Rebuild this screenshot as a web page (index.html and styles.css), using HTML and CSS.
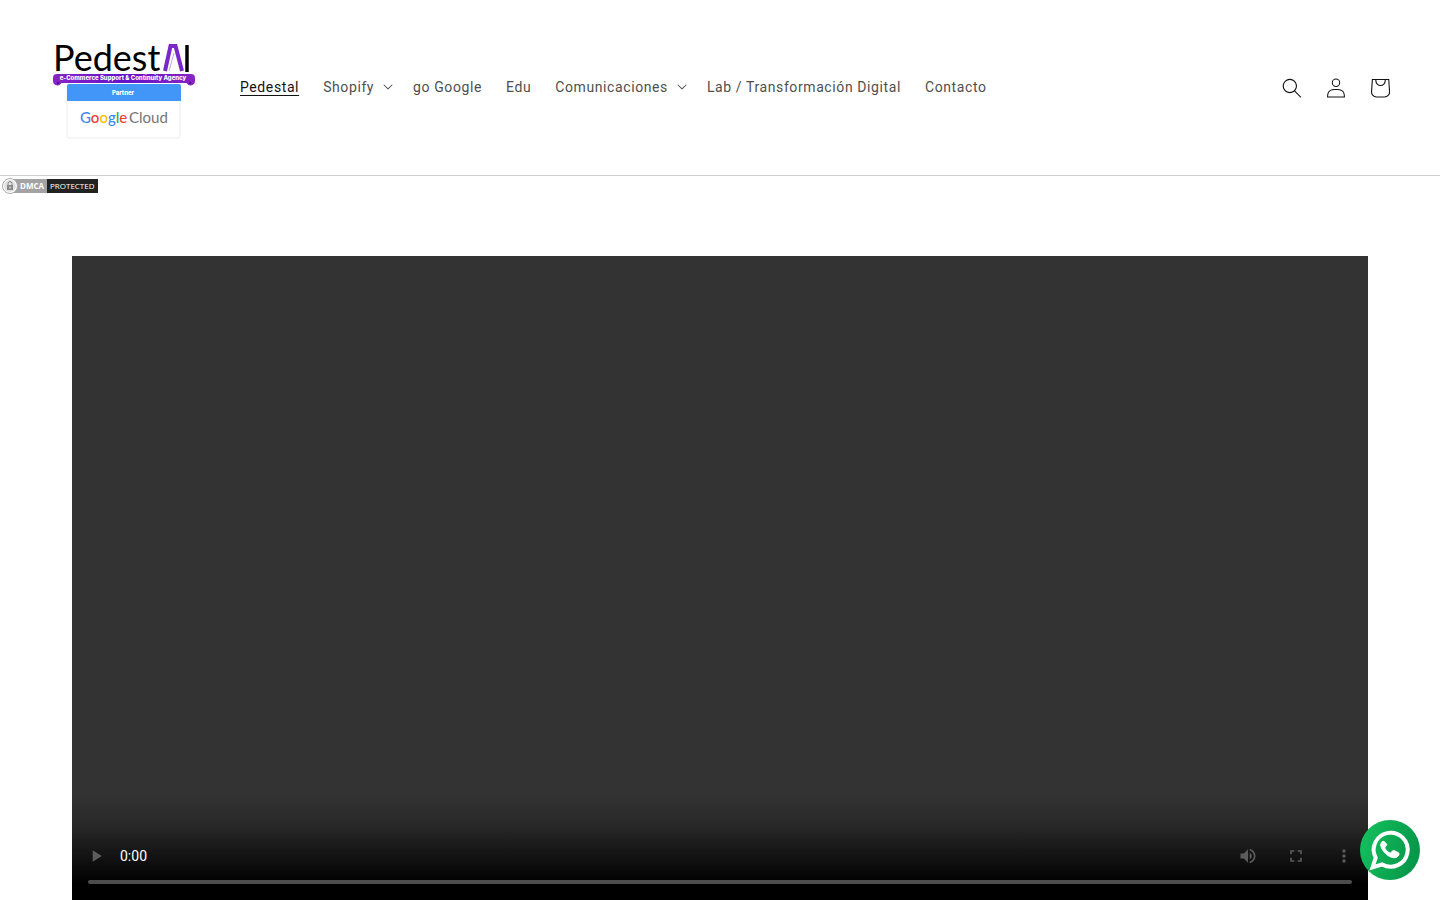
FILE: index.html
```html
<!DOCTYPE html>
<html lang="es">
<head>
    <meta charset="UTF-8">
    <meta name="viewport" content="width=device-width, initial-scale=1.0">
    <title>Pedestal</title>
    <link rel="stylesheet" href="styles.css">
</head>
<body>
    <header class="header">
        <a href="#" class="header-logo" aria-label="Pedestal">
            <svg width="150" height="135" viewBox="50 20 150 135">
                <defs>
                    <linearGradient id="ribbon" x1="0" x2="1" y1="0" y2="0">
                        <stop offset="0" stop-color="#8a24c4"/>
                        <stop offset="0.5" stop-color="#6412c8"/>
                        <stop offset="1" stop-color="#8a24c4"/>
                    </linearGradient>
                </defs>
                <text x="53" y="71" class="logo-name">Pedest</text>
                <path d="M165 71l5.500-25h5l6.500 25" fill="none" stroke="#7a28c8" stroke-width="4"/>
                <path d="M169 71l5-18" stroke="#c9a3ea" stroke-width="1" fill="none"/>
                <path d="M187 45v27" stroke="#000" stroke-width="3.500"/>
                <path d="M57 74h134a4 4 0 0 1 4 4v3a4.500 4.500 0 0 1-8.500 2H61.500a4.500 4.500 0 0 1-8.500-2v-3a4 4 0 0 1 4-4z" fill="url(#ribbon)"/>
                <circle cx="58" cy="83" r="1.200" fill="#4a0c91"/>
                <circle cx="190" cy="83" r="1.200" fill="#4a0c91"/>
                <text x="123" y="80" class="logo-tagline">e-Commerce Support &amp; Continuity Agency</text>
                <rect x="67" y="85" width="113" height="53" rx="2" fill="#fff" stroke="#ececec"/>
                <path d="M69 84h110a2 2 0 0 1 2 2v15H67V86a2 2 0 0 1 2-2z" fill="#4196f7"/>
                <text x="123" y="95" class="logo-tagline">Partner</text>
                <text x="80" y="123" class="logo-google"><tspan fill="#4285f4">G</tspan><tspan fill="#ea4335">o</tspan><tspan fill="#fbbc05">o</tspan><tspan fill="#4285f4">g</tspan><tspan fill="#34a853">l</tspan><tspan fill="#ea4335">e</tspan></text>
                <text x="129" y="123" class="logo-cloud">Cloud</text>
            </svg>
        </a>

        <nav class="menu">
            <a href="#" class="menu-link active">Pedestal</a>
            <button type="button" class="menu-link has-caret">Shopify
                <svg width="10" height="6" viewBox="0 0 10 6"><path fill="currentColor" d="M9.354.646a.5.5 0 0 0-.708 0L5 4.293 1.354.646a.5.5 0 0 0-.708.708l4 4a.5.5 0 0 0 .708 0l4-4a.5.5 0 0 0 0-.708z"/></svg>
            </button>
            <a href="#" class="menu-link">go Google</a>
            <a href="#" class="menu-link">Edu</a>
            <button type="button" class="menu-link has-caret">Comunicaciones
                <svg width="10" height="6" viewBox="0 0 10 6"><path fill="currentColor" d="M9.354.646a.5.5 0 0 0-.708 0L5 4.293 1.354.646a.5.5 0 0 0-.708.708l4 4a.5.5 0 0 0 .708 0l4-4a.5.5 0 0 0 0-.708z"/></svg>
            </button>
            <a href="#" class="menu-link">Lab / Transformación Digital</a>
            <a href="#" class="menu-link">Contacto</a>
        </nav>

        <div class="header-icons">
            <button type="button" class="icon-button" aria-label="Búsqueda">
                <svg width="20" height="20" viewBox="0 0 18 19"><path fill="currentColor" fill-rule="evenodd" d="M11.030 11.680A5.784 5.784 0 1 1 2.850 3.500a5.784 5.784 0 0 1 8.180 8.180zm.260 1.120a6.780 6.780 0 1 1 .720-.700l5.400 5.400a.500.500 0 1 1-.710.700l-5.410-5.400z"/></svg>
            </button>
            <a href="#" class="icon-button" aria-label="Iniciar sesión">
                <svg width="20" height="20" viewBox="0 0 18 19"><path fill="currentColor" fill-rule="evenodd" d="M6 4.500a3 3 0 1 1 6 0 3 3 0 0 1-6 0zm3-4a4 4 0 1 0 0 8 4 4 0 0 0 0-8zm5.580 12.150c1.120.820 1.830 2.240 1.910 4.850H1.510c.080-2.600.790-4.030 1.900-4.850C4.660 11.750 6.500 11.500 9 11.500s4.350.260 5.580 1.150zM9 10.500c-2.500 0-4.650.240-6.170 1.350C1.270 12.980.500 14.930.500 18v.500h17V18c0-3.070-.770-5.020-2.330-6.150-1.520-1.100-3.670-1.350-6.170-1.350z"/></svg>
            </a>
            <a href="#" class="icon-button" aria-label="Carrito">
                <svg width="44" height="44" viewBox="0 0 40 40"><path fill="currentColor" fill-rule="evenodd" d="M15.750 11.800h-3.160l-.770 11.600a5 5 0 0 0 4.990 5.340h7.380a5 5 0 0 0 4.990-5.330l-.780-11.610zm0 1h-2.220l-.710 10.670a4 4 0 0 0 3.990 4.270h7.380a4 4 0 0 0 4-4.270l-.720-10.670h-2.220v.630a4.750 4.750 0 1 1-9.500 0zm8.500 0h-7.500v.630a3.750 3.750 0 1 0 7.500 0z"/></svg>
            </a>
        </div>
    </header>

    <a href="#" class="dmca" aria-label="DMCA Protected">
        <svg width="96" height="16" viewBox="0 0 96 16">
            <rect x="8" y="1" width="37" height="14" fill="#a3a3a3"/>
            <rect x="45" y="1" width="51" height="14" fill="#222"/>
            <circle cx="8" cy="8" r="7.500" fill="#fff" stroke="#aaa"/>
            <circle cx="8" cy="8" r="6" fill="#e2e2e2"/>
            <rect x="5" y="7" width="6" height="5" fill="#888"/>
            <path d="M6 7V5.500a2 2 0 0 1 4 0V7" fill="none" stroke="#888"/>
            <path d="M8 8.500v2" stroke="#fff"/>
            <text x="18" y="11" class="dmca-name">DMCA</text>
            <text x="48" y="11" class="dmca-status">PROTECTED</text>
        </svg>
    </a>

    <main class="page">
        <section class="player" aria-label="Video">
            <div class="player-controls">
                <div class="player-row">
                    <button type="button" class="player-button" aria-label="Reproducir">
                        <svg width="20" height="20" viewBox="0 0 24 24"><path fill="currentColor" d="M8 5v14l11-7z"/></svg>
                    </button>
                    <span class="player-time">0:00</span>
                    <button type="button" class="player-button" aria-label="Silenciar">
                        <svg width="20" height="20" viewBox="0 0 24 24"><path fill="currentColor" d="M3 9v6h4l5 5V4L7 9H3zm13.500 3A4.500 4.500 0 0 0 14 7.970v8.050c1.480-.730 2.500-2.250 2.500-4.020zM14 3.230v2.060c2.890.860 5 3.540 5 6.710s-2.110 5.850-5 6.710v2.060c4.010-.910 7-4.490 7-8.770s-2.990-7.860-7-8.770z"/></svg>
                    </button>
                    <button type="button" class="player-button" aria-label="Pantalla completa">
                        <svg width="20" height="20" viewBox="0 0 24 24"><path fill="currentColor" d="M7 14H5v5h5v-2H7v-3zM5 10h2V7h3V5H5v5zm12 7h-3v2h5v-5h-2v3zM14 5v2h3v3h2V5h-5z"/></svg>
                    </button>
                    <button type="button" class="player-button" aria-label="Más opciones">
                        <svg width="20" height="20" viewBox="0 0 24 24"><path fill="currentColor" d="M12 8a2 2 0 1 0 0-4 2 2 0 0 0 0 4zm0 2a2 2 0 1 0 0 4 2 2 0 0 0 0-4zm0 6a2 2 0 1 0 0 4 2 2 0 0 0 0-4z"/></svg>
                    </button>
                </div>
                <input type="range" class="player-timeline" min="0" max="100" value="0" aria-label="Progreso del video" disabled>
            </div>
        </section>
    </main>

    <a href="#" class="whatsapp" aria-label="WhatsApp">
        <svg width="60" height="60" viewBox="0 0 60 60">
            <defs>
                <linearGradient id="wa" x1="0" x2="1" y1="0" y2="0.300">
                    <stop offset="0" stop-color="#14c35f"/>
                    <stop offset="1" stop-color="#07984a"/>
                </linearGradient>
            </defs>
            <circle cx="30" cy="30" r="30" fill="url(#wa)"/>
            <path d="M12.500 47.500l3.200-9.800A17 17 0 1 1 22.200 44.400z" fill="none" stroke="#fff" stroke-width="4"/>
            <path d="M24 21.500c-1.200-.5-2.400.3-3 1.700-.9 2.300.3 5 2.500 8 2.600 3.500 6.300 6 10 6.500 2.600.3 4.700-1 5.400-3 .3-1 0-1.700-.7-2.100l-3.900-1.900c-.8-.4-1.500-.2-2 .4l-1.200 1.500c-.4.500-1 .5-1.600.2-2.200-1.100-3.500-2.500-4.500-4.400-.3-.6-.2-1.100.3-1.600l1-1.200c.4-.5.5-1.100.3-1.700z" fill="#fff" stroke="#fff"/>
        </svg>
    </a>
</body>
</html>
```
FILE: styles.css
```css
body {
    margin: 0;
    min-height: 100vh;
    display: flex;
    flex-direction: column;
    background-color: #ffffff;
    color: #121212;
    font-family: Roboto, "Liberation Sans", sans-serif;
    font-size: 14px;
}
a {
    color: inherit;
    text-decoration: none;
}
button {
    border: none;
    padding: 0;
    background: none;
    color: inherit;
    font: inherit;
    cursor: pointer;
}
svg {
    display: block;
}

/* Header */
.header {
    display: flex;
    align-items: center;
    padding: 20px 38px 20px 50px;
    border-bottom: 1px solid #d0d0d0;
}
.header-logo {
    margin-right: 28px;
}
.logo-name {
    font-family: Lato, sans-serif;
    font-size: 36px;
    fill: #000000;
}
.logo-tagline {
    font-family: Inter, sans-serif;
    font-size: 6px;
    font-weight: 800;
    fill: #ffffff;
    text-anchor: middle;
}
.logo-google,
.logo-cloud {
    font-family: Lato, sans-serif;
    font-size: 15px;
}
.logo-google {
    font-weight: 500;
}
.logo-cloud {
    fill: #757575;
}
.menu {
    display: flex;
    flex-wrap: wrap;
}
.menu-link {
    padding: 11px 12px 13px;
    line-height: 18px;
    letter-spacing: 0.6px;
    color: #4f4f4f;
}
.menu-link:hover,
.menu-link.active {
    color: #121212;
    text-decoration: underline;
    text-underline-offset: 3px;
}
.has-caret {
    display: flex;
    align-items: center;
    gap: 9px;
    padding-right: 8px;
}
.header-icons {
    display: flex;
    margin-left: auto;
}
.icon-button {
    width: 44px;
    height: 44px;
    display: flex;
    align-items: center;
    justify-content: center;
}

/* DMCA badge */
.dmca {
    align-self: flex-start;
    margin: 2px;
}
.dmca-name,
.dmca-status {
    font-family: "Open Sans", sans-serif;
    font-size: 8px;
    fill: #ffffff;
}
.dmca-name {
    font-weight: 700;
}

/* Video */
.page {
    flex: 1;
    display: flex;
    padding: 60px 72px 0;
}
.player {
    flex: 1;
    display: flex;
    flex-direction: column;
    justify-content: flex-end;
    background-color: #333333;
}
.player-controls {
    padding: 40px 0 16px;
    background: linear-gradient(to bottom, rgba(0, 0, 0, 0), rgba(0, 0, 0, 0.2) 30%, #000000 85%);
}
.player-row {
    display: flex;
    align-items: center;
    color: #5c5c5c;
}
.player-button {
    width: 48px;
    height: 48px;
    display: flex;
    align-items: center;
    justify-content: center;
}
.player-time {
    margin-right: auto;
    color: #ffffff;
}
.player-timeline {
    appearance: none;
    display: block;
    width: calc(100% - 32px);
    height: 4px;
    margin: 0 16px;
    border-radius: 2px;
    background-color: #4d4d4d;
}
.player-timeline::-webkit-slider-thumb {
    appearance: none;
    width: 0;
    height: 0;
}

/* WhatsApp */
.whatsapp {
    position: fixed;
    right: 20px;
    bottom: 20px;
}
```
